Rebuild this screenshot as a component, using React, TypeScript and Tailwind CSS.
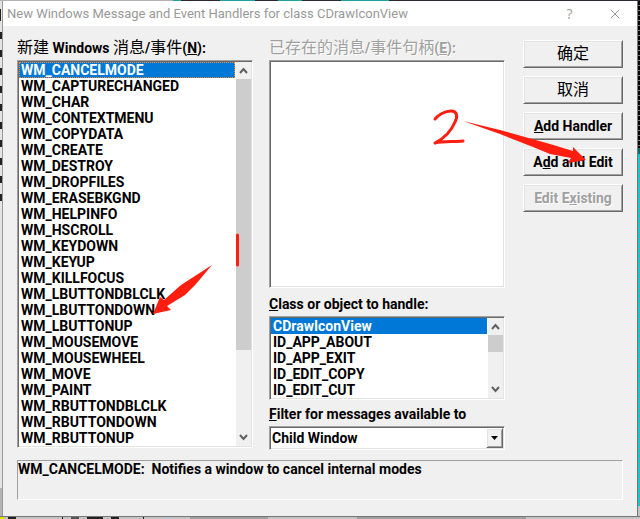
import { useState } from 'react'
import type { ReactNode } from 'react'
import { X } from 'lucide-react'

const messages = [
  'WM_CANCELMODE',
  'WM_CAPTURECHANGED',
  'WM_CHAR',
  'WM_CONTEXTMENU',
  'WM_COPYDATA',
  'WM_CREATE',
  'WM_DESTROY',
  'WM_DROPFILES',
  'WM_ERASEBKGND',
  'WM_HELPINFO',
  'WM_HSCROLL',
  'WM_KEYDOWN',
  'WM_KEYUP',
  'WM_KILLFOCUS',
  'WM_LBUTTONDBLCLK',
  'WM_LBUTTONDOWN',
  'WM_LBUTTONUP',
  'WM_MOUSEMOVE',
  'WM_MOUSEWHEEL',
  'WM_MOVE',
  'WM_PAINT',
  'WM_RBUTTONDBLCLK',
  'WM_RBUTTONDOWN',
  'WM_RBUTTONUP',
]

const objects = ['CDrawIconView', 'ID_APP_ABOUT', 'ID_APP_EXIT', 'ID_EDIT_COPY', 'ID_EDIT_CUT']

const sunken =
  'border border-t-[#a0a0a0] border-l-[#a0a0a0] border-b-white border-r-white bg-white p-px shadow-[inset_1px_1px_#696969,inset_-1px_-1px_#e3e3e3]'
const raised =
  'border border-t-white border-l-white border-b-[#696969] border-r-[#696969] bg-[#f0f0f0] shadow-[inset_1px_1px_#e3e3e3,inset_-1px_-1px_#a0a0a0]'

function Arrow({ down }: { down?: boolean }) {
  return (
    <svg width="9" height="7" fill="none" stroke="#606060" strokeWidth="2" aria-hidden="true">
      <path d={down ? 'M1 1L4.5 5L8 1' : 'M1 6L4.5 2L8 6'} />
    </svg>
  )
}

function ScrollBar({ thumb }: { thumb: string }) {
  return (
    <div className="flex w-4 shrink-0 flex-col border-l border-white bg-[#f0f0f0]">
      <button aria-label="Scroll up" className="flex h-[17px] shrink-0 items-center justify-center">
        <Arrow />
      </button>
      <div className="flex-1">
        <div className={`bg-[#cdcdcd] ${thumb}`} />
      </div>
      <button aria-label="Scroll down" className="flex h-[17px] shrink-0 items-center justify-center">
        <Arrow down />
      </button>
    </div>
  )
}

interface ListBoxProps {
  labelId: string
  items: string[]
  thumb: string
  focused?: boolean
}

function ListBox({ labelId, items, thumb, focused }: ListBoxProps) {
  const [selected, setSelected] = useState(items[0])

  return (
    <div className={`flex ${sunken}`}>
      <ul role="listbox" aria-labelledby={labelId} className="min-w-0 flex-1">
        {items.map(item => (
          <li
            key={item}
            role="option"
            aria-selected={item === selected}
            onClick={() => setSelected(item)}
            className={`h-4 px-0.5 leading-4 ${item === selected ? 'bg-[#0078d7] text-white' : ''} ${
              item === selected && focused ? 'outline-1 -outline-offset-1 outline-dotted outline-[#ff8728]' : ''
            }`}
          >
            {item}
          </li>
        ))}
      </ul>
      <ScrollBar thumb={thumb} />
    </div>
  )
}

function Hanzi({ children }: { children: string }) {
  return <span className="text-base leading-4 font-normal">{children}</span>
}

function DialogButton({ children, disabled }: { children: ReactNode; disabled?: boolean }) {
  return (
    <button
      disabled={disabled}
      className={`h-7 text-center disabled:text-[#a0a0a0] disabled:text-shadow-[1px_1px_0_#fff] ${raised}`}
    >
      {children}
    </button>
  )
}

function Annotations() {
  return (
    <svg
      className="pointer-events-none absolute top-0 left-0"
      width="640"
      height="519"
      fill="none"
      stroke="#ff1e10"
      strokeLinecap="round"
      strokeLinejoin="round"
      aria-hidden="true"
    >
      <path d="M237.5 235V265" strokeWidth="3" />
      <path
        d="M435 119C438 115 445 111 451 111C457 111 458 116 455 122C452 129 445 138 435 143C443 141 454 142 463 141"
        strokeWidth="3"
      />
      <path d="M212 265L181 285L164 300L160 297L153 314L171 310L167 306L185 295L196 284Z" fill="#ff1e10" stroke="none" />
      <path
        d="M463 121L500 130L550 144L573 151L573 147L586 160L568 163L571 158L550 154L533 147L500 134Z"
        fill="#ff1e10"
        stroke="none"
      />
    </svg>
  )
}

export default function App() {
  const [filter, setFilter] = useState('Child Window')

  return (
    <div className="relative flex flex-col bg-[#c4c4c4] font-[Roboto,'Noto_Sans_CJK_SC',sans-serif] text-black">
      <div className="flex h-px bg-[#2a2a30]">
        <div className="w-[173px] bg-[#b5b0b0]" />
        <div className="w-2 bg-[#20a0a0]" />
        <div className="ml-[39px] w-[35px] bg-[#20a0a0]" />
        <div className="ml-[23px] w-6 bg-[#20a0a0]" />
        <div className="ml-[39px] w-12 bg-[#20a0a0]" />
      </div>
      <div className="flex">
        <div className="flex w-[3px] flex-col border-r border-[#999] bg-[#e4e4e4]">
          <div className="mt-2 h-3 bg-[linear-gradient(90deg,#222_1px,transparent_1px)]" />
          <div className="mt-1 h-44 bg-[repeating-linear-gradient(transparent_0_7px,#222_7px_14px,transparent_14px_18px)]" />
          <div className="mt-[287px] flex-1 bg-[#b4b4b4]" />
        </div>
        <main className="min-w-0 flex-1 bg-[#f0f0f0]">
          <header className="flex h-[25px] items-center bg-white pl-1 text-[#999]">
            <h1 className="flex-1 truncate text-[13px]">
              New Windows Message and Event Handlers for class CDrawIconView
            </h1>
            <button aria-label="Help" className="w-[45px] font-['Open_Sans',sans-serif] text-sm">
              ?
            </button>
            <button aria-label="Close" className="flex w-[45px] justify-center">
              <X className="size-4" strokeWidth={1.5} />
            </button>
          </header>

          <div className="px-3.5 pt-3.5 pb-4 text-sm leading-5 font-bold">
            <div className="flex gap-[18px]">
              <div className="grid min-w-0 flex-1 grid-cols-2 items-start gap-4">
                <section>
                  <h2 id="messages-label" className="h-5 leading-4 whitespace-nowrap">
                    <Hanzi>新建</Hanzi> Windows <Hanzi>消息</Hanzi>/<Hanzi>事件</Hanzi>(<u>N</u>):
                  </h2>
                  <ListBox labelId="messages-label" items={messages} thumb="h-[271px]" focused />
                </section>

                <section className="flex flex-col">
                  <h2
                    id="handlers-label"
                    className="h-5 leading-4 whitespace-nowrap text-[#a0a0a0] text-shadow-[1px_1px_0_#fff]"
                  >
                    <Hanzi>已存在的消息</Hanzi>/<Hanzi>事件句柄</Hanzi>(<u>E</u>):
                  </h2>
                  <ul role="listbox" aria-labelledby="handlers-label" className={`h-[228px] ${sunken}`} />
                  <h2 id="objects-label" className="mt-1.5 mb-0.5 truncate">
                    <u>C</u>lass or object to handle:
                  </h2>
                  <ListBox labelId="objects-label" items={objects} thumb="h-[17px]" />
                  <label htmlFor="filter" className="mt-1 mb-0.5 truncate">
                    <u>F</u>ilter for messages available to
                  </label>
                  <div className={`relative h-6 ${sunken}`}>
                    <select
                      id="filter"
                      value={filter}
                      onChange={e => setFilter(e.target.value)}
                      className="block h-5 w-full appearance-none px-px leading-5"
                    >
                      <option>Child Window</option>
                    </select>
                    <span
                      className={`pointer-events-none absolute inset-y-px right-px flex w-[17px] items-center justify-center ${raised}`}
                    >
                      <svg width="7" height="4" aria-hidden="true">
                        <path d="M0 0H7L3.5 4Z" />
                      </svg>
                    </span>
                  </div>
                </section>
              </div>

              <section className="flex w-[100px] flex-col gap-2">
                <DialogButton>
                  <Hanzi>确定</Hanzi>
                </DialogButton>
                <DialogButton>
                  <Hanzi>取消</Hanzi>
                </DialogButton>
                <DialogButton>
                  <u>A</u>dd Handler
                </DialogButton>
                <DialogButton>
                  A<u>d</u>d and Edit
                </DialogButton>
                <DialogButton disabled>
                  Edit E<u>x</u>isting
                </DialogButton>
              </section>
            </div>

            <p className="mt-2.5 h-10 border border-t-[#a0a0a0] border-r-white border-b-white border-l-[#a0a0a0] leading-4 whitespace-pre-wrap">
              WM_CANCELMODE:{'  '}Notifies a window to cancel internal modes
            </p>
          </div>
        </main>
        <div className="flex w-[3px] flex-col border-l border-[#777]">
          <div className="h-[147px] bg-[repeating-linear-gradient(#000_0_4px,#777_4px_5px)]" />
          <div className="h-1.5 bg-[#0b6b6b]" />
          <div className="flex-1 bg-[repeating-linear-gradient(#00d0d0_0_4px,#6aa0a0_4px_5px)]" />
          <div className="h-2.5 bg-[#c4c4c4]" />
        </div>
      </div>
      <div className="flex h-[3px] border-t border-[#777]">
        <div className="w-1 bg-[#e8e000]" />
        <div className="ml-1 w-2 bg-[#222]" />
        <div className="ml-[46px] w-px bg-[#222]" />
        <div className="ml-2 w-2 bg-[#555]" />
        <div className="ml-2 w-4 bg-[#222]" />
        <div className="ml-2 w-2 bg-[#222]" />
        <div className="ml-6 w-px bg-[#222]" />
        <div className="ml-5 w-2 bg-[#b9c8d8]" />
        <div className="ml-[18px] w-[78px] bg-[#a0a0a0]" />
        <div className="ml-[89px] w-[169px] bg-[#a0a0a0]" />
      </div>
      <Annotations />
    </div>
  )
}
